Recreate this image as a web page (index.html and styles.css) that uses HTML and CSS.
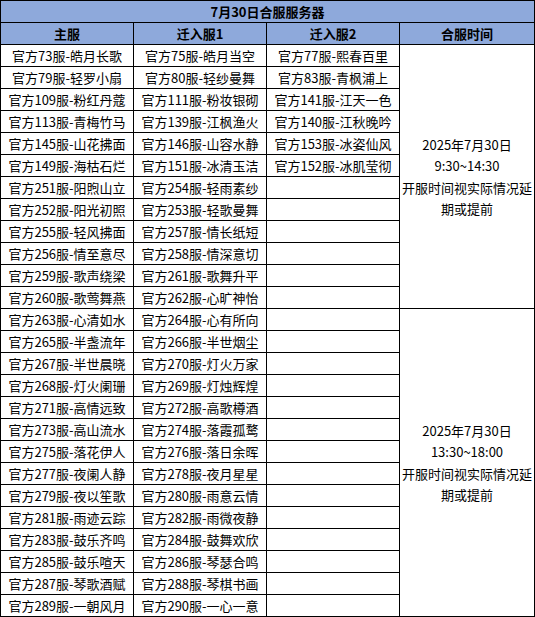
FILE: index.html
```html
<!DOCTYPE html>
<html lang="zh-CN">
<head>
<meta charset="utf-8">
<title>7月30日合服服务器</title>
<link rel="stylesheet" href="styles.css">
</head>
<body>
<div class="sheet">
  <div class="cell title">7月30日合服服务器</div>
  <div class="cell head">主服</div>
  <div class="cell head">迁入服1</div>
  <div class="cell head">迁入服2</div>
  <div class="cell head">合服时间</div>

  <div class="cell time time1">2025年7月30日<br>9:30~14:30<br>开服时间视实际情况延<br>期或提前</div>
  <div class="cell time time2">2025年7月30日<br>13:30~18:00<br>开服时间视实际情况延<br>期或提前</div>

  <div class="cell">官方73服-皓月长歌</div><div class="cell">官方75服-皓月当空</div><div class="cell">官方77服-熙春百里</div>
  <div class="cell">官方79服-轻罗小扇</div><div class="cell">官方80服-轻纱曼舞</div><div class="cell">官方83服-青枫浦上</div>
  <div class="cell">官方109服-粉红丹蔻</div><div class="cell">官方111服-粉妆银砌</div><div class="cell">官方141服-江天一色</div>
  <div class="cell">官方113服-青梅竹马</div><div class="cell">官方139服-江枫渔火</div><div class="cell">官方140服-江秋晚吟</div>
  <div class="cell">官方145服-山花拂面</div><div class="cell">官方146服-山容水静</div><div class="cell">官方153服-冰姿仙风</div>
  <div class="cell">官方149服-海枯石烂</div><div class="cell">官方151服-冰清玉洁</div><div class="cell">官方152服-冰肌莹彻</div>
  <div class="cell">官方251服-阳煦山立</div><div class="cell">官方254服-轻雨素纱</div><div class="cell"></div>
  <div class="cell">官方252服-阳光初照</div><div class="cell">官方253服-轻歌曼舞</div><div class="cell"></div>
  <div class="cell">官方255服-轻风拂面</div><div class="cell">官方257服-情长纸短</div><div class="cell"></div>
  <div class="cell">官方256服-情至意尽</div><div class="cell">官方258服-情深意切</div><div class="cell"></div>
  <div class="cell">官方259服-歌声绕梁</div><div class="cell">官方261服-歌舞升平</div><div class="cell"></div>
  <div class="cell">官方260服-歌莺舞燕</div><div class="cell">官方262服-心旷神怡</div><div class="cell"></div>

  <div class="cell">官方263服-心清如水</div><div class="cell">官方264服-心有所向</div><div class="cell"></div>
  <div class="cell">官方265服-半盏流年</div><div class="cell">官方266服-半世烟尘</div><div class="cell"></div>
  <div class="cell">官方267服-半世晨晓</div><div class="cell">官方270服-灯火万家</div><div class="cell"></div>
  <div class="cell">官方268服-灯火阑珊</div><div class="cell">官方269服-灯烛辉煌</div><div class="cell"></div>
  <div class="cell">官方271服-高情远致</div><div class="cell">官方272服-高歌樽酒</div><div class="cell"></div>
  <div class="cell">官方273服-高山流水</div><div class="cell">官方274服-落霞孤鹜</div><div class="cell"></div>
  <div class="cell">官方275服-落花伊人</div><div class="cell">官方276服-落日余晖</div><div class="cell"></div>
  <div class="cell">官方277服-夜阑人静</div><div class="cell">官方278服-夜月星星</div><div class="cell"></div>
  <div class="cell">官方279服-夜以笙歌</div><div class="cell">官方280服-雨意云情</div><div class="cell"></div>
  <div class="cell">官方281服-雨迹云踪</div><div class="cell">官方282服-雨微夜静</div><div class="cell"></div>
  <div class="cell">官方283服-鼓乐齐鸣</div><div class="cell">官方284服-鼓舞欢欣</div><div class="cell"></div>
  <div class="cell">官方285服-鼓乐喧天</div><div class="cell">官方286服-琴瑟合鸣</div><div class="cell"></div>
  <div class="cell">官方287服-琴歌酒赋</div><div class="cell">官方288服-琴棋书画</div><div class="cell"></div>
  <div class="cell">官方289服-一朝风月</div><div class="cell">官方290服-一心一意</div><div class="cell"></div>
</div>
</body>
</html>
```

FILE: styles.css
```css
html, body {
  margin: 0;
  padding: 0;
  background: #ffffff;
}

.sheet {
  display: grid;
  grid-template-columns: 132px 132px 132px 134px;
  grid-auto-rows: 21px;
  gap: 1px;
  padding: 1px;
  width: 533px;
  background: #000000;
  font-family: "Noto Sans CJK SC", "Noto Sans", sans-serif;
  font-size: 13px;
  color: #000000;
}

.cell {
  background: #ffffff;
  display: flex;
  align-items: center;
  justify-content: center;
  text-align: center;
  white-space: nowrap;
  line-height: 21px;
  overflow: hidden;
}

.title {
  grid-column: 1 / span 4;
  background: #8ea9db;
  font-weight: bold;
}

.head {
  background: #8ea9db;
  font-weight: bold;
}

.time {
  grid-column: 4;
  flex-direction: column;
  line-height: 21.5px;
}

.time1 {
  grid-row: 3 / span 12;
}

.time2 {
  grid-row: 15 / span 14;
}
```
